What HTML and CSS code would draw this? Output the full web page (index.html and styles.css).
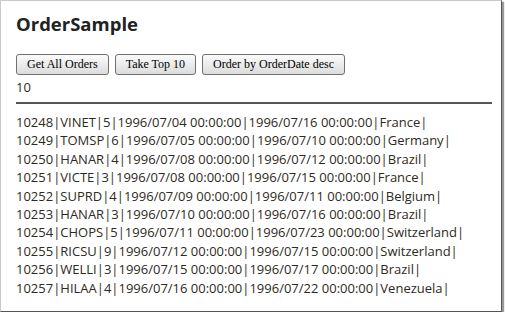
FILE: index.html
```html
<!DOCTYPE html>
<html lang="en">
<head>
  <meta charset="UTF-8">
  <title>OrderSample</title>
  <link rel="stylesheet" href="styles.css">
</head>
<body>

  <div class="window">
    <h2>OrderSample</h2>

    <div class="actions">
      <button type="button">Get All Orders</button>
      <button type="button">Take Top 10</button>
      <button type="button">Order by OrderDate desc</button>
    </div>

    <div class="count">10</div>
    <hr>

    <div class="orders">
      <div>10248|VINET|5|1996/07/04 00:00:00|1996/07/16 00:00:00|France|</div>
      <div>10249|TOMSP|6|1996/07/05 00:00:00|1996/07/10 00:00:00|Germany|</div>
      <div>10250|HANAR|4|1996/07/08 00:00:00|1996/07/12 00:00:00|Brazil|</div>
      <div>10251|VICTE|3|1996/07/08 00:00:00|1996/07/15 00:00:00|France|</div>
      <div>10252|SUPRD|4|1996/07/09 00:00:00|1996/07/11 00:00:00|Belgium|</div>
      <div>10253|HANAR|3|1996/07/10 00:00:00|1996/07/16 00:00:00|Brazil|</div>
      <div>10254|CHOPS|5|1996/07/11 00:00:00|1996/07/23 00:00:00|Switzerland|</div>
      <div>10255|RICSU|9|1996/07/12 00:00:00|1996/07/15 00:00:00|Switzerland|</div>
      <div>10256|WELLI|3|1996/07/15 00:00:00|1996/07/17 00:00:00|Brazil|</div>
      <div>10257|HILAA|4|1996/07/16 00:00:00|1996/07/22 00:00:00|Venezuela|</div>
    </div>
  </div>

</body>
</html>
```

FILE: styles.css
```css
* {
  box-sizing: border-box;
}

body {
  margin: 0;
  background: #fff;
  font-family: 'Open Sans', 'DejaVu Sans', sans-serif;
  color: #2e2a22;
}

.window {
  width: 502px;
  height: 312px;
  padding: 0 9px 0 15px;
  border-top: 1px solid #c9c9c9;
  border-left: 1px solid #c9c9c9;
  border-right: 1px solid #555;
  border-bottom: 1px solid #555;
  box-shadow: 2px 2px 1px #9a9a9a;
}

h2 {
  margin: 11px 0 0;
  font-size: 18.5px;
  font-weight: bold;
  line-height: 23px;
  color: #222;
}

.actions {
  display: flex;
  gap: 6px;
  margin-top: 19px;
}

button {
  height: 21px;
  padding: 0 10px;
  font-family: 'Liberation Serif', serif;
  font-size: 12px;
  color: #000;
  background: linear-gradient(#fbfbfb, #dcdcdc);
  border: 1px solid #707070;
  border-radius: 3px;
}

.count {
  margin-top: 4px;
  font-size: 13px;
  line-height: 16px;
}

hr {
  margin: 7px 0 0;
  border: none;
  border-top: 2px solid #555;
}

.orders {
  margin-top: 9px;
  font-size: 13px;
  line-height: 18.4px;
}
```
